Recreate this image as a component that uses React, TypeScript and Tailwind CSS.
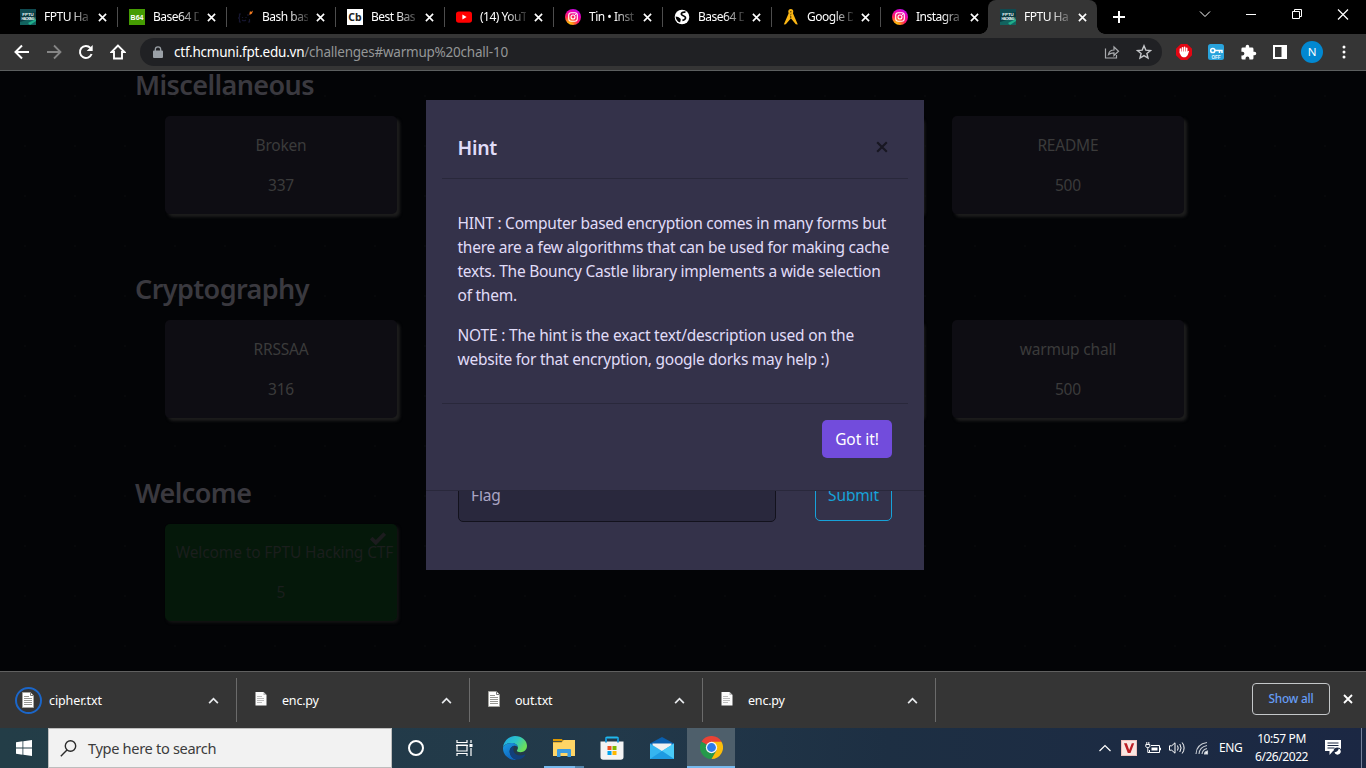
import React from 'react';

type IconProps = { className?: string };

const CloseX = ({ className = '' }: IconProps) => (
  <svg viewBox="0 0 10 10" className={`h-[9px] w-[9px] shrink-0 ${className}`} fill="none" stroke="currentColor" strokeWidth="1.8">
    <path d="M1 1l8 8M9 1L1 9" />
  </svg>
);

const Caret = () => (
  <svg viewBox="0 0 12 8" className="h-[7px] w-[11px]" fill="none" stroke="#e8eaed" strokeWidth="2">
    <path d="M1 7l5-5 5 5" />
  </svg>
);

const FptuIcon = () => (
  <svg viewBox="0 0 16 16" className="h-4 w-4">
    <rect width="16" height="16" fill="#0b3a40" />
    <path d="M0 13L16 8v8H0z" fill="#12635f" />
    <path d="M8 14l8-4v2l-6 4z" fill="#1fae8a" />
    <path d="M0 0h16v3L0 6z" fill="#0f4a50" />
    <text x="8" y="7.300" fontSize="4.400" fontWeight="700" fill="#e5f5f5" textAnchor="middle" fontFamily="Liberation Sans, sans-serif">FPTU</text>
    <text x="8" y="11" fontSize="3.500" fontWeight="700" fill="#e5f5f5" textAnchor="middle" fontFamily="Liberation Sans, sans-serif" textLength="13">HACKING</text>
  </svg>
);

const B64Icon = () => (
  <div className="flex h-4 w-4 items-center justify-center bg-[#459c02] font-['Liberation_Sans',sans-serif] text-[7px] font-bold leading-none text-white">B64</div>
);

const BashIcon = () => (
  <svg viewBox="0 0 16 16" className="h-4 w-4" fill="none">
    <path d="M3 5H1.500v3L.5 9l1 1v3H3M10 5v2M4.500 8v1M8 8v1M4 11q2 1.500 4 0M10 13h1.500v-3" stroke="#161630" strokeWidth="1.200" />
    <path d="M11.500 4.500l.5-2.500 1 1 2-1.500-1 3-2.500 1.500z" fill="#f47b20" />
  </svg>
);

const CbIcon = () => (
  <div className="flex h-4 w-4 items-center justify-center bg-white font-['Noto_Sans',sans-serif] text-[10.5px] font-bold leading-none text-[#222]">Cb</div>
);

const YoutubeIcon = () => (
  <svg viewBox="0 0 16 16" className="h-4 w-4">
    <rect y="2.400" width="16" height="11.400" rx="2.800" fill="#f00" />
    <path d="M6.400 5.600v5l4.200-2.500z" fill="#fff" />
  </svg>
);

const InstagramIcon = () => (
  <svg viewBox="0 0 16 16" className="h-4 w-4">
    <defs>
      <radialGradient id="insta" cx="0.25" cy="1" r="1.100">
        <stop offset="0" stopColor="#fd0" />
        <stop offset="0.25" stopColor="#ff8a1e" />
        <stop offset="0.5" stopColor="#ff1f5a" />
        <stop offset="0.8" stopColor="#e800b8" />
        <stop offset="1" stopColor="#b70df0" />
      </radialGradient>
    </defs>
    <circle cx="8" cy="8" r="8" fill="url(#insta)" />
    <g fill="none" stroke="#fff" strokeWidth="1.100">
      <rect x="3.700" y="3.700" width="8.600" height="8.600" rx="2.500" />
      <circle cx="8" cy="8" r="2" />
    </g>
    <circle cx="10.500" cy="5.500" r=".6" fill="#fff" />
  </svg>
);

const GlobeIcon = () => (
  <svg viewBox="0 0 16 16" className="h-4 w-4">
    <circle cx="8" cy="8" r="7.300" fill="#fff" />
    <path d="M11.500 3.200C9 2.800 7 3.800 7.400 5.400s3.400 1 4 2.900-1.400 2.700-3 3" fill="none" stroke="#000" strokeWidth="1.700" />
    <path d="M1.600 7.500c1.800.2 3.500.8 4.700 2 1 1 .2 2.300-.2 4C3.500 12.700 1.800 10.500 1.600 7.500z" fill="#000" />
  </svg>
);

const DorksIcon = () => (
  <svg viewBox="0 0 16 16" className="h-4 w-4">
    <circle cx="7.800" cy="2.600" r="1.900" fill="#fbb614" stroke="#fbb614" strokeWidth="1.200" />
    <circle cx="7.800" cy="2.800" r=".8" fill="#5a3f00" />
    <path d="M6 3.500L.8 15.500l2-.3L8 9.200V6zM9.600 3.500l5.200 12-2-.3L7.800 9.200V6z" fill="#fbb614" />
    <path d="M7.800 7v2" stroke="#000" strokeWidth=".6" />
  </svg>
);

const tabs: { icon: React.ReactNode; title: string; active?: boolean }[] = [
  { icon: <FptuIcon />, title: 'FPTU Ha' },
  { icon: <B64Icon />, title: 'Base64 D' },
  { icon: <BashIcon />, title: 'Bash bas' },
  { icon: <CbIcon />, title: 'Best Bas' },
  { icon: <YoutubeIcon />, title: '(14) YouT' },
  { icon: <InstagramIcon />, title: 'Tin • Inst' },
  { icon: <GlobeIcon />, title: 'Base64 D' },
  { icon: <DorksIcon />, title: 'Google D' },
  { icon: <InstagramIcon />, title: 'Instagra' },
  { icon: <FptuIcon />, title: 'FPTU Ha', active: true },
];

function TabStrip() {
  return (
    <div className="flex h-[34px] shrink-0 bg-black pl-2">
      {tabs.map((tab, i) => (
        <div
          key={i}
          className={`relative flex h-[34px] w-[109px] shrink-0 items-center pl-3 ${tab.active ? '-ml-px rounded-t-[8px] bg-[#353535]' : ''}`}
        >
          {tab.icon}
          <div className="ml-2 w-[46px] whitespace-nowrap text-[12px] tracking-[-0.5px] text-white [mask-image:linear-gradient(to_right,#000_26px,transparent_50px)]">
            {tab.title}
          </div>
          <CloseX className="ml-[7.500px] text-white" />
          {!tab.active && i < 8 && <div className="absolute -right-px top-[7px] h-5 w-px bg-[#4d4d4d]" />}
          {tab.active && (
            <>
              <div className="absolute bottom-0 -left-2 h-2 w-2 bg-[radial-gradient(circle_at_0_0,transparent_7.5px,#353535_8px)]" />
              <div className="absolute bottom-0 -right-2 h-2 w-2 bg-[radial-gradient(circle_at_100%_0,transparent_7.5px,#353535_8px)]" />
            </>
          )}
        </div>
      ))}
      <svg viewBox="0 0 12 12" className="ml-[16px] mt-[11px] h-3 w-3 text-white" stroke="currentColor" strokeWidth="2">
        <path d="M6 0v12M0 6h12" />
      </svg>
      <div className="ml-auto flex items-start text-white">
        <svg viewBox="0 0 46 28" className="h-7 w-[46px]" fill="none" stroke="currentColor">
          <path d="M18 11.500l5 5 5-5" />
        </svg>
        <svg viewBox="0 0 46 28" className="h-7 w-[46px]" fill="none" stroke="currentColor">
          <path d="M18 14.500h10" />
        </svg>
        <svg viewBox="0 0 46 28" className="h-7 w-[46px]" fill="none" stroke="currentColor">
          <path d="M18.500 11.500h7v7h-7zM20.500 11.500v-2h7v7h-2" />
        </svg>
        <svg viewBox="0 0 46 28" className="h-7 w-[46px]" fill="none" stroke="currentColor" strokeWidth="1.200">
          <path d="M18 9.500l10 10M28 9.500l-10 10" />
        </svg>
      </div>
    </div>
  );
}

function Toolbar() {
  return (
    <div className="flex h-9 shrink-0 items-center bg-[#353535] pl-[14px] pr-[14px]">
      <div className="flex gap-4 text-white">
        <svg viewBox="0 0 16 16" className="h-4 w-4" fill="none" stroke="currentColor" strokeWidth="2">
          <path d="M15 8H2M8 1.500L1.500 8 8 14.500" />
        </svg>
        <svg viewBox="0 0 16 16" className="h-4 w-4 text-[#868686]" fill="none" stroke="currentColor" strokeWidth="1.800">
          <path d="M1 8h13M8 1.500L14.500 8 8 14.500" />
        </svg>
        <svg viewBox="0 0 16 16" className="h-4 w-4" fill="none" stroke="currentColor" strokeWidth="2">
          <path d="M13.600 10A6 6 0 1 1 12.400 3.900" />
          <path d="M14.700 1v6H8.700z" fill="currentColor" stroke="none" />
        </svg>
        <svg viewBox="0 0 16 16" className="h-4 w-4" fill="none" stroke="currentColor" strokeWidth="1.900">
          <path d="M8 1.500L1.500 8H4v6.500h8V8h2.500z" />
        </svg>
      </div>
      <div className="ml-[14px] flex h-7 w-[1022px] items-center rounded-full bg-[#202124] pl-[13px] pr-[10px]">
        <svg viewBox="0 0 10 13" className="h-[13px] w-[10px]" fill="#9aa0a6">
          <path d="M1 4.500h8a1 1 0 0 1 1 1V11a1 1 0 0 1-1 1H1a1 1 0 0 1-1-1V5.500a1 1 0 0 1 1-1z" />
          <path d="M2.300 5V3.500a2.700 2.700 0 0 1 5.400 0V5" fill="none" stroke="#9aa0a6" strokeWidth="1.300" />
        </svg>
        <div className="ml-[11px] mt-px whitespace-nowrap text-[13.500px] tracking-[-0.23px] text-[#949697]">
          <span className="text-white">ctf.hcmuni.fpt.edu.vn</span>/challenges#warmup%20chall-10
        </div>
        <svg viewBox="0 0 16 16" className="ml-auto h-4 w-4" fill="none" stroke="#a9abae" strokeWidth="1.200">
          <path d="M1.500 4.500v9.500h11v-3M4.500 10.500c.5-3 2.500-4.500 5.500-4.500V3l4.500 4.300L10 11.500V8.800c-2.500 0-4 .4-5.500 1.700z" />
        </svg>
        <svg viewBox="0 0 16 16" className="ml-4 h-4 w-4" fill="none" stroke="#c5c7ca" strokeWidth="1.400">
          <path d="M8 1.800l1.800 4.300 4.700.4-3.600 3 1.100 4.500-4-2.400L4 14l1.100-4.500-3.600-3 4.700-.4z" />
        </svg>
      </div>
      <div className="ml-auto flex items-center">
        <svg viewBox="0 0 16 16" className="h-4 w-4">
          <path d="M4.800 0h6.400L16 4.800v6.400L11.200 16H4.800L0 11.200V4.800z" fill="#e30613" />
          <path d="M4.400 9V5M6.500 8V3.700M8.600 8V3.200M10.700 8V4.200" stroke="#fff" strokeWidth="1.600" strokeLinecap="round" />
          <path d="M3.700 7.500h7.800l1-.8q.9.300.3 1.300c-.9 2.800-1.800 5.200-4.300 5.300C5.300 13.300 4 11 3.700 7.500z" fill="#fff" />
        </svg>
        <svg viewBox="0 0 16 16" className="ml-4 h-4 w-4">
          <rect width="16" height="16" rx="2.500" fill="#29a3dc" />
          <circle cx="4.800" cy="6.500" r="2.100" fill="none" stroke="#fff" strokeWidth="1.500" />
          <path d="M7 6.500h7v2.500M11.500 6.500V9" fill="none" stroke="#fff" strokeWidth="1.500" />
          <text x="8" y="14.500" textAnchor="middle" fontSize="4.600" fontWeight="700" fill="#e6f7ff" fontFamily="Liberation Sans, sans-serif">OFF</text>
        </svg>
        <svg viewBox="0 0 24 24" className="ml-4 h-[17px] w-[17px]" fill="#fff">
          <path d="M20.500 11H19V7a2 2 0 0 0-2-2h-4V3.500a2.500 2.500 0 0 0-5 0V5H4a2 2 0 0 0-2 2v3.800h1.500a2.700 2.700 0 0 1 0 5.400H2V20a2 2 0 0 0 2 2h3.800v-1.500a2.700 2.700 0 0 1 5.400 0V22H17a2 2 0 0 0 2-2v-4h1.500a2.500 2.500 0 0 0 0-5z" />
        </svg>
        <svg viewBox="0 0 14 14" className="ml-4 h-[14px] w-[14px]" fill="#fff">
          <path fillRule="evenodd" d="M0 0h14v14H0zM2 2v10h6.500V2z" />
        </svg>
        <div className="ml-[14px] flex h-[22px] w-[22px] items-center justify-center rounded-full bg-[#0288d1] text-[11.500px] leading-none text-white">N</div>
        <svg viewBox="0 0 4 14" className="ml-[19px] mr-[6px] h-[14px] w-1" fill="#fff">
          <circle cx="2" cy="2" r="1.500" /><circle cx="2" cy="7" r="1.500" /><circle cx="2" cy="12" r="1.500" />
        </svg>
      </div>
    </div>
  );
}

type Challenge = { title: string; points: string; solved?: boolean };

const categories: { name: string; items: Challenge[] }[] = [
  {
    name: 'Miscellaneous',
    items: [{ title: 'Broken', points: '337' }, { title: '', points: '' }, { title: '', points: '' }, { title: 'README', points: '500' }],
  },
  {
    name: 'Cryptography',
    items: [{ title: 'RRSSAA', points: '316' }, { title: '', points: '' }, { title: '', points: '' }, { title: 'warmup chall', points: '500' }],
  },
  { name: 'Welcome', items: [{ title: 'Welcome to FPTU Hacking CTF', points: '5', solved: true }] },
];

function ChallengeCard({ title, points, solved }: Challenge) {
  return (
    <div
      className={`relative w-[232px] rounded-[5px] text-center text-[15.500px] leading-6 ${
        solved
          ? 'h-[97px] bg-[#05180a] pt-4 text-[#1b1e1d] shadow-[2px_2px_3px_#131313]'
          : 'h-[98px] bg-[#0e0d13] pt-[17px] tracking-[-0.2px] text-[#3b3b3b] shadow-[3px_3px_3px_#1d1d1d]'
      }`}
    >
      <p className={`flex justify-center whitespace-nowrap ${solved ? 'pl-[7px] tracking-[-0.12px]' : ''}`}>{title}</p>
      <p className="mt-4">{points}</p>
      {solved && (
        <svg viewBox="0 0 16 13" className="absolute right-[11px] top-[8px] h-[13px] w-4" fill="none" stroke="#1c1c1e" strokeWidth="3.800">
          <path d="M1.200 6l4.600 4.600L14.800 1.500" />
        </svg>
      )}
    </div>
  );
}

function Page() {
  return (
    <div className="relative h-[600px] shrink-0 overflow-hidden bg-[#030406] bg-[radial-gradient(circle_at_25px_25px,#07080a_0.8px,transparent_1.200px)] bg-[length:50px_50px]">
      <div className="pl-[135px]">
        {categories.map((c) => (
          <section key={c.name} className="h-[204px]">
            <h3 className="h-[45px] text-[27px] font-semibold leading-[27px] tracking-[-0.6px] text-[#3a393f]">{c.name}</h3>
            <div className="grid gap-[30.300px] pl-[30px] [grid-template-columns:repeat(4,232px)]">
              {c.items.map((item, j) => (
                <ChallengeCard key={j} {...item} />
              ))}
            </div>
          </section>
        ))}
      </div>

      <div className="absolute left-[426px] top-[29px] flex h-[470px] w-[498px] flex-col justify-end bg-[#34324a] px-8 pb-12">
        <div className="flex justify-between text-[15.500px] tracking-[-0.15px]">
          <div className="h-[52px] w-[318px] rounded-[5px] border border-[#13121d] bg-[#29283d] px-3 pt-3 leading-6 text-[#a9a5c4]">Flag</div>
          <div className="h-[51px] w-[77px] rounded-[5px] border border-[#17a2d9] pt-3 text-center leading-6 tracking-[-0.15px] text-[#17a2d9]">Submit</div>
        </div>
      </div>

      <div className="absolute left-[426px] top-[29px] flex h-[391px] w-[498px] flex-col border-b border-[#29283b] bg-[#34324a] px-4 pt-4 text-[#e0dcf8]">
        <div className="flex h-[63px] items-center justify-between border-b border-[#29283b] pl-[15.500px] pr-[20px]">
          <h5 className="mt-px text-[19.500px] font-semibold leading-[30px] tracking-[-0.3px]">Hint</h5>
          <CloseX className="h-[12px] w-[12px] text-[#181722]" />
        </div>
        <div className="h-[225px] border-b border-[#29283b] pl-[15.500px] pt-8 text-[15.500px] leading-6 tracking-[-0.25px]">
          <p className="whitespace-nowrap">
            HINT : Computer based encryption comes in many forms but<br />
            there are a few algorithms that can be used for making cache<br />
            texts. The Bouncy Castle library implements a wide selection<br />
            of them.
          </p>
          <p className="mt-4 whitespace-nowrap">
            <span className="tracking-[-0.2px]">NOTE : The hint is the exact text/description used on the</span><br />
            website for that encryption, google dorks may help :)
          </p>
        </div>
        <div className="flex justify-end pr-4 pt-4">
          <button className="h-[38px] w-[70px] rounded-[5px] bg-[#724cdc] text-[15.500px] leading-6 tracking-[-0.05px] text-white">Got it!</button>
        </div>
      </div>
    </div>
  );
}

const FileIcon = ({ python }: { python?: boolean }) =>
  python ? (
    <svg viewBox="0 0 12 16" className="h-4 w-3">
      <path d="M.5 1h8l3 3v10.500H.5z" fill="#fbfbfb" />
      <path d="M8.500 1l3 3h-3z" fill="#b9b9b9" />
      <path d="M2 5.500h5M2 7.500h7M2 9.500h7M2 11.500h5" stroke="#b5b5b5" strokeWidth=".9" />
    </svg>
  ) : (
    <svg viewBox="0 0 12 16" className="h-4 w-3">
      <path d="M.5.500h8l3 3v12H.5z" fill="#fff" stroke="#a5a5a0" />
      <path d="M8.500.500v3h3" fill="none" stroke="#777" />
      <path d="M2 4.500h5M2 6.500h8M2 8.500h8M2 10.500h8M2 12.500h8" stroke="#8a8a84" strokeWidth=".9" />
    </svg>
  );

const downloads = [
  { name: 'cipher.txt', ring: true },
  { name: 'enc.py', python: true },
  { name: 'out.txt' },
  { name: 'enc.py', python: true },
];

function DownloadShelf() {
  return (
    <div className="flex h-[57px] shrink-0 border-t border-[#606060] bg-[#353535] pt-[6px] text-white">
      {downloads.map((d, i) => (
        <div key={i} className={`flex h-11 items-center border-r border-[#6b6b6b] pr-[17.500px] ${i === 0 ? 'w-[237px] pl-[15px]' : 'w-[233px] pl-[10px]'}`}>
          <div className={`flex h-[27px] w-[27px] items-center justify-center rounded-full ${d.ring ? 'border-2 border-[#1b66c9] pr-px pb-px' : 'pb-[2px]'}`}>
            <FileIcon python={d.python} />
          </div>
          <span className={`mt-[2px] text-[12.500px] ${d.ring ? 'ml-[7px] tracking-[-0.1px]' : 'ml-[8px] tracking-[-0.2px]'}`}>{d.name}</span>
          <div className="ml-auto"><Caret /></div>
        </div>
      ))}
      <div className="ml-auto flex h-11 items-center pr-[13px]">
        <button className="mb-[2px] h-8 w-[78px] rounded-[4px] border border-[#c4c7c9] text-[11.800px] font-medium tracking-[-0.2px] text-[#669df6]">Show all</button>
        <CloseX className="ml-[13px] mb-[2px] h-[10px] w-[10px]" />
      </div>
    </div>
  );
}

const EdgeIcon = () => (
  <svg viewBox="0 0 24 24" className="h-6 w-6">
    <defs>
      <linearGradient id="edgeTop" x1="0" y1="0" x2="1" y2="0.5">
        <stop offset="0" stopColor="#1ca5e8" /><stop offset="0.55" stopColor="#2cc3c8" /><stop offset="1" stopColor="#6be05a" />
      </linearGradient>
      <linearGradient id="edgeLow" x1="0" y1="0" x2="0.6" y2="1">
        <stop offset="0" stopColor="#1b9de2" /><stop offset="1" stopColor="#0d61bd" />
      </linearGradient>
    </defs>
    <path d="M0 11.500C.7 5 5.800 0 12 0c7 0 12 4.600 12 9.800 0 4-3 6.400-6.500 6.400-2.200 0-4.200-.8-3.500-1.900.8-1.200 1-2 .9-2.900C14.600 8.600 12 7 8.700 7 4.700 7 1.200 9 0 11.500z" fill="url(#edgeTop)" />
    <path d="M0 11.500C1.600 8.600 4.800 7 8.500 7c3.700 0 6.200 2 6.400 4.400-.6-1.200-2-2-3.700-1.700-3 .6-4.900 3.400-4.500 6.600.4 3.500 3 6.500 6.800 7.600-7.500.6-14-4.900-13.500-12.400z" fill="url(#edgeLow)" />
    <path d="M11.200 9.700c-3 .6-4.900 3.400-4.500 6.600.5 4.300 4.200 7.600 8.300 7.300 3-.3 5.700-2 7.200-4.400.3-.5-.2-.9-.7-.6-3.600 1.900-8.600 1.100-10.400-2.300-1.300-2.400-.7-4.700.1-6.600z" fill="#123f7a" />
  </svg>
);

const ExplorerIcon = () => (
  <svg viewBox="0 0 22 18" className="h-[18px] w-[22px]">
    <path d="M0 0h9l1 2H0z" fill="#dc9700" />
    <path d="M0 17V3.200h8.500L10.500 1H22v16z" fill="#ffd566" />
    <path d="M0 3.300h8.600L10.500 1.200" fill="none" stroke="#f2b731" />
    <path d="M4 18V11q0-1 1-1h12q1 0 1 1v7h-3.500v-4h-7v4z" fill="#3b9be0" />
  </svg>
);

const StoreIcon = () => (
  <svg viewBox="0 0 24 24" className="h-6 w-6">
    <path d="M6 7V2.500Q6 1.500 7 1.500h10q1 0 1 1V7" fill="none" stroke="#20b8ec" strokeWidth="1.800" />
    <path d="M.5 5.500h23V21a2.800 2.800 0 0 1-2.800 2.800H3.300A2.800 2.800 0 0 1 .5 21z" fill="#f4f4f4" />
    <path d="M6 6.500V2M18 6.500V2" stroke="#178fd0" strokeWidth="1.800" />
    <path d="M7.500 10h4v4h-4z" fill="#f25022" /><path d="M12.500 10h4v4h-4z" fill="#7fba00" />
    <path d="M7.500 15h4v4h-4z" fill="#00a4ef" /><path d="M12.500 15h4v4h-4z" fill="#ffb900" />
  </svg>
);

const MailIcon = () => (
  <svg viewBox="0 0 24 22" className="h-[22px] w-6">
    <path d="M0 6.500L12 0l12 6.500V9H0z" fill="#0a5fae" />
    <path d="M2.500 6.500h19v7l-9.500 2-9.500-2z" fill="#f1f1f1" />
    <path d="M0 6.500l12 7.500 12-7.500V22H0z" fill="#35b5f0" />
    <path d="M12 14l12-7.500V22z" fill="#4acbf8" />
    <path d="M0 22h24L12 14z" fill="#1e9be2" />
  </svg>
);

const ChromeIcon = () => (
  <svg viewBox="0 0 24 24" className="h-[23px] w-[23px]">
    <path d="M12 12L1.600 6A12 12 0 0 1 22.400 6z" fill="#ea4335" />
    <path d="M12 12L1.600 6A12 12 0 0 0 12 24l5.200-9z" fill="#25994a" />
    <path d="M12 6h10.400A12 12 0 0 1 12 24l5.200-9z" fill="#fbbd0a" />
    <circle cx="12" cy="12" r="5.900" fill="#f3f5f7" />
    <circle cx="12" cy="12" r="4.600" fill="#2d7bea" />
  </svg>
);

function Taskbar() {
  return (
    <div className="flex h-10 shrink-0 bg-[linear-gradient(to_right,#233d47,#22394a_45%,#1d2f43_65%,#1b2743)] text-white">
      <div className="flex w-12 items-center justify-center">
        <svg viewBox="0 0 16 16" className="h-4 w-4" fill="#fff">
          <path d="M0 2.200l6.500-.9v6.200H0zM7.300 1.200L16 0v7.500H7.300zM0 8.400h6.500v6.300L0 13.800zM7.300 8.400H16V16l-8.700-1.200z" />
        </svg>
      </div>
      <div className="flex w-[344px] items-center border border-[#bdbdbd] bg-[#f2f2f2] pl-[11px]">
        <svg viewBox="0 0 17 17" className="h-[17px] w-[17px]" fill="none" stroke="#2b2b2b" strokeWidth="1.400">
          <circle cx="10.500" cy="6" r="5.200" /><path d="M7 10L.8 16.200" />
        </svg>
        <span className="ml-[11px] mt-px text-[14.600px] tracking-[-0.33px] text-[#3c3c3c]">Type here to search</span>
      </div>
      <div className="flex w-12 items-center justify-center">
        <div className="h-4 w-4 rounded-full border-2 border-white" />
      </div>
      <div className="flex w-12 items-center justify-center">
        <svg viewBox="0 0 17 16" className="h-4 w-[17px]" fill="none" stroke="#fff" strokeWidth="1.200">
          <path d="M1 0v2.500h10V0M1 16v-2.500h10V16M0 5.500h12M1 5h10v6H1zM15 0v3M15 8v8" /><path d="M13.500 4h3v3h-3z" fill="#fff" stroke="none" />
        </svg>
      </div>
      <div className="ml-[3px] flex w-12 items-center justify-center"><EdgeIcon /></div>
      <div className="relative ml-px flex w-[47px] items-center justify-center">
        <ExplorerIcon />
        <div className="absolute bottom-0 left-[4px] flex h-[2px] w-10"><i className="w-[31px] bg-[#76b9ed]" /><i className="flex-1 bg-[#5284aa]" /></div>
      </div>
      <div className="flex w-[49px] items-center justify-center pl-px"><StoreIcon /></div>
      <div className="ml-px flex w-[50px] items-center justify-center"><MailIcon /></div>
      <div className="flex w-12 items-center justify-center border-b-2 border-[#76b9ed] bg-[#4e5f6b]"><ChromeIcon /></div>

      <div className="ml-auto flex items-center text-[12px] tracking-[-0.35px]">
        <svg viewBox="0 0 12 8" className="h-2 w-3" fill="none" stroke="#fff" strokeWidth="1.200"><path d="M.5 7L6 1.500 11.500 7" /></svg>
        <svg viewBox="0 0 16 16" className="ml-[10px] h-4 w-4">
          <rect width="16" height="16" fill="#f1c1bd" /><rect x="1" y="1" width="14" height="14" fill="#fbe7e2" />
          <path d="M3 3.200h2.800L8.200 10l2.600-6.800h2.400L9.500 13H6.800z" fill="#bd1f26" />
        </svg>
        <svg viewBox="0 0 16 12" className="ml-2 h-3 w-4" fill="none" stroke="#fff">
          <path d="M6 3.500h8.500v7H4.500V8M14.500 6h1v2h-1" /><path d="M6.500 5.500h6v3h-6z" fill="#fff" stroke="none" />
          <path d="M.8 2.500h4v2q0 1-2 1t-2-1zM1.800 0v2.500M3.800 0v2.500M2.800 5.500v5h2" />
        </svg>
        <svg viewBox="0 0 17 14" className="ml-2 h-[14px] w-[17px]" fill="none" stroke="#fff">
          <path d="M.5 4.800h2.200L6 1.800v10.400L2.700 9.200H.5zM8.500 4.500q1.400 2.500 0 5M10.800 3q2.600 4 0 8M13.200 1.500q3.800 5.500 0 11" />
        </svg>
        <svg viewBox="0 0 14 14" className="ml-[9px] h-[14px] w-[14px]" fill="none" stroke="#c7ccd3" strokeWidth="1.100">
          <path d="M1 13Q1.500 3 12 1.500M4 13Q4.500 6 12 4.500M7 13q.5-4.500 5-5.500" /><path d="M9.500 13q0-2.500 3-3v3z" fill="#fff" />
        </svg>
        <span className="ml-[10px] w-6 text-[12px] tracking-[-0.4px]">ENG</span>
        <div className="ml-3 w-[53px] text-center leading-[18px]"><div className="tracking-[-0.4px]">10:57 PM</div><div className="-mx-1 tracking-[-0.45px]">6/26/2022</div></div>
        <svg viewBox="0 0 16 16" className="ml-[17px] h-4 w-4">
          <path d="M0 0h16v11H8l-3.500 4V11H0z" fill="#fff" />
          <path d="M2.500 3h11M2.500 5.500h11M2.500 8h7" stroke="#1c2943" />
          <circle cx="12.500" cy="11.500" r="4" fill="#1c2943" />
          <path d="M13.800 8.500a3.200 3.200 0 1 1-4.300 3.800q3.200 0 4.300-3.800z" fill="#fff" />
        </svg>
        <div className="ml-5 mr-1 h-10 w-px bg-[#76809a]" />
      </div>
    </div>
  );
}

export default function App() {
  return (
    <div className="flex h-[768px] w-[1366px] flex-col overflow-hidden bg-black font-['Noto_Sans',sans-serif]">
      <TabStrip />
      <Toolbar />
      <div className="h-px shrink-0 bg-[#5c5f5f]" />
      <Page />
      <DownloadShelf />
      <Taskbar />
    </div>
  );
}
